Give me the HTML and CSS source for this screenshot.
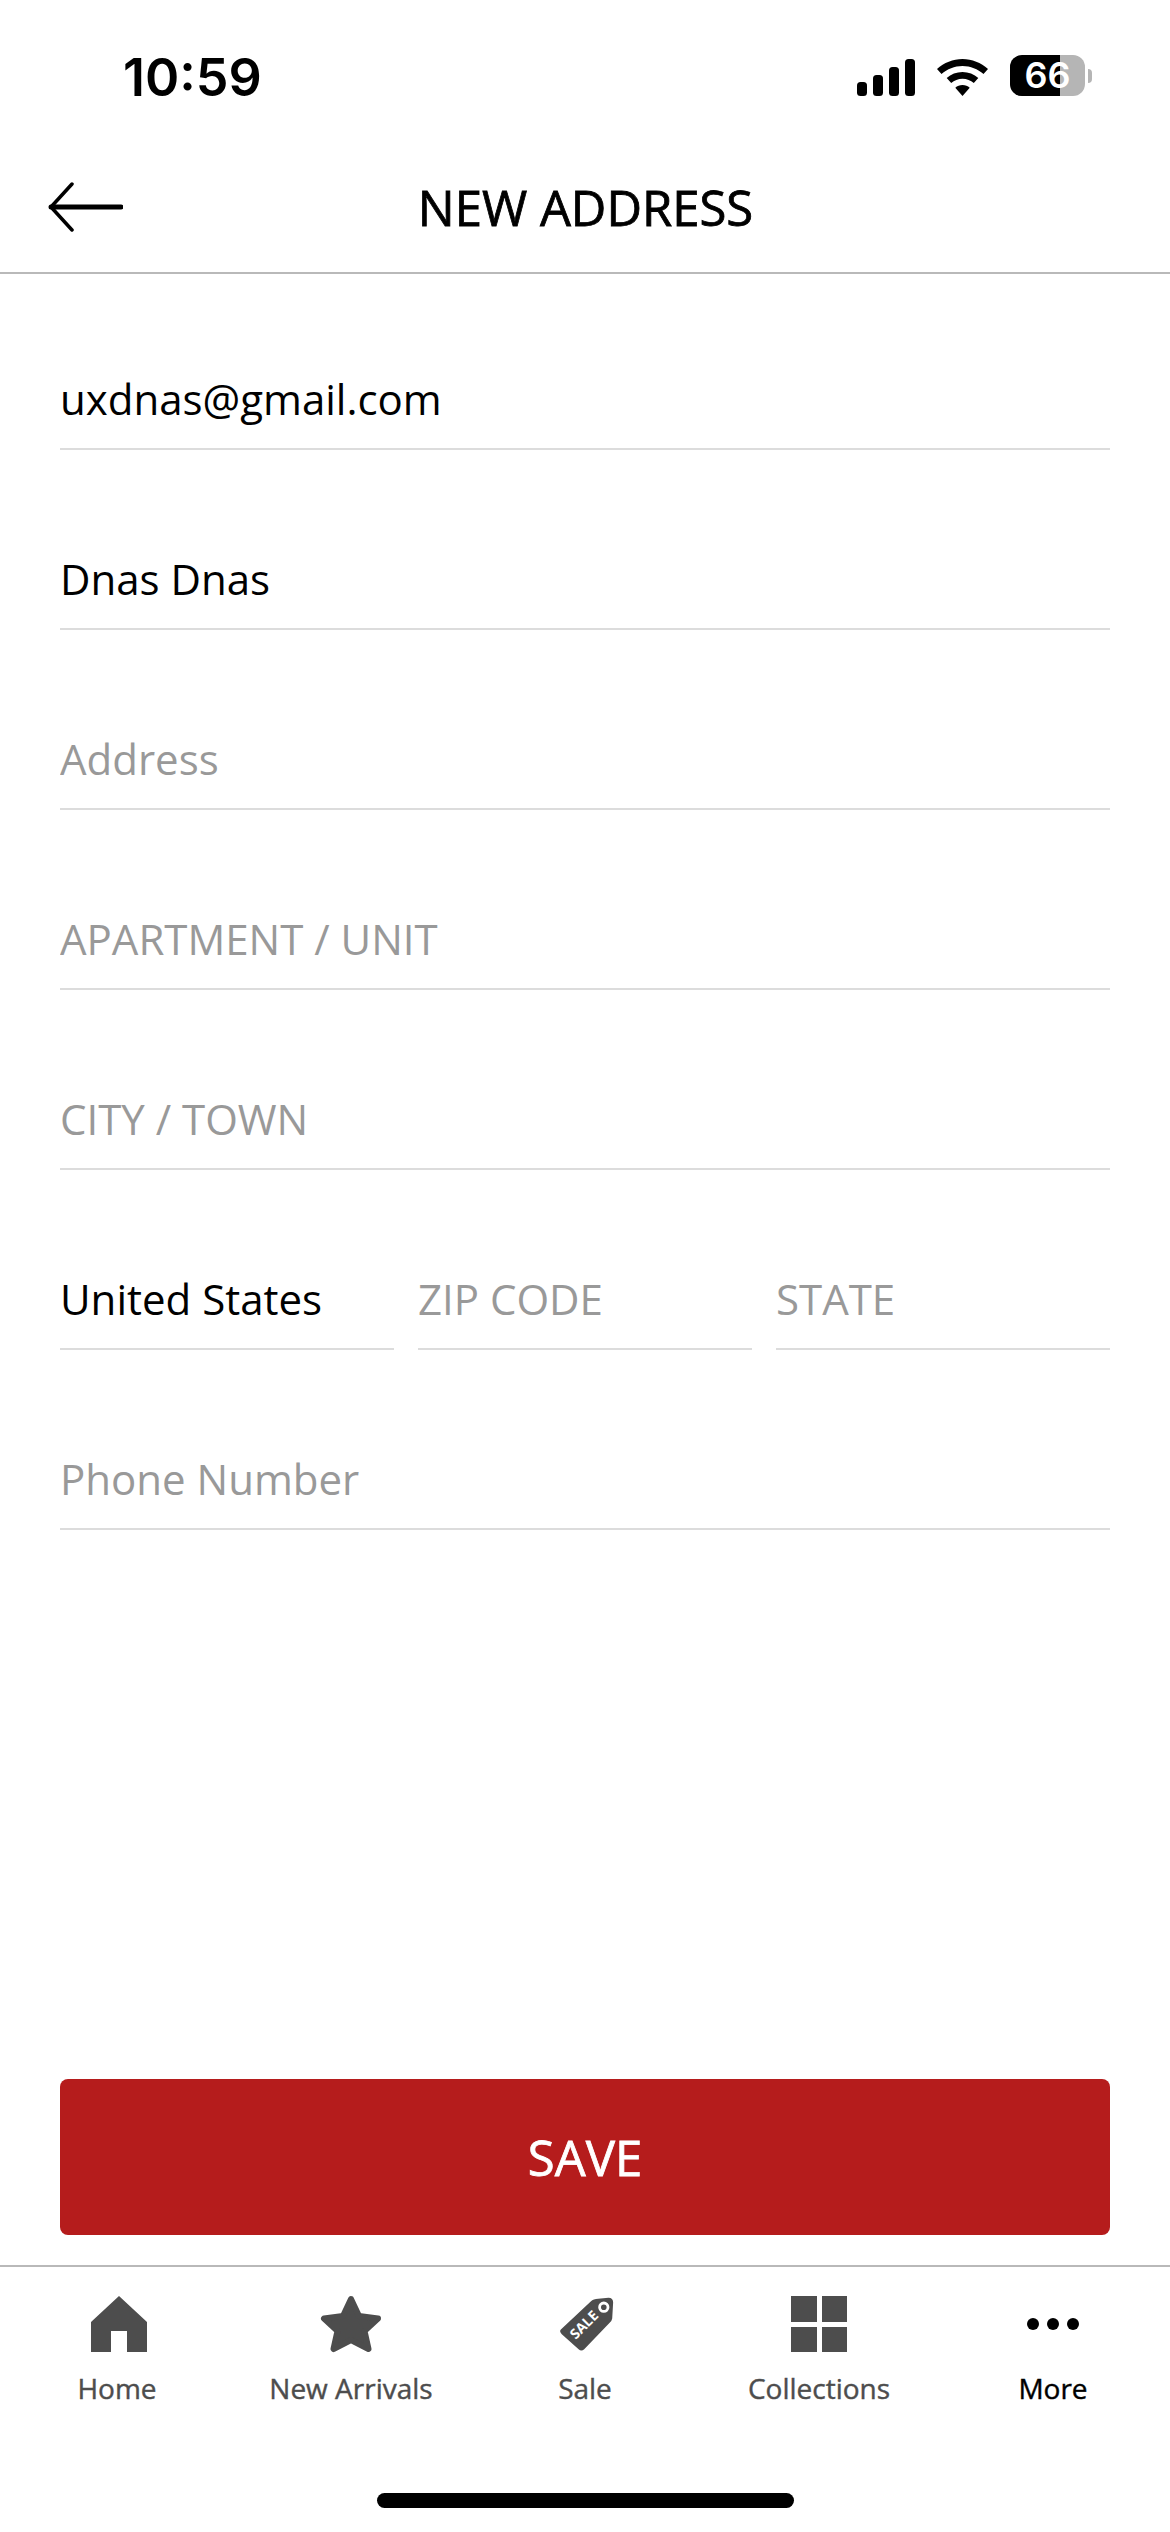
FILE: index.html
```html
<!DOCTYPE html>
<html>
<head>
    <title>New Address</title>
    <meta name="viewport" content="width=device-width, initial-scale=1.0">
    <link rel="stylesheet" href="styles.css">
</head>
<body>
    <div id="container">
        <div class="status-bar">
            <span class="time">10:59</span>
            <div class="status-icons">
                <svg class="signal" width="58" height="37" viewBox="0 0 58 37">
                    <rect x="0" y="23" width="10" height="14" rx="3.5"/>
                    <rect x="16" y="16" width="10" height="21" rx="3.5"/>
                    <rect x="32" y="8" width="10" height="29" rx="3.5"/>
                    <rect x="48" y="0" width="10" height="37" rx="3.5"/>
                </svg>
                <svg class="wifi" width="51" height="37" viewBox="0 0 51 37">
                    <path d="M25.5 0C35 0 44 3.700 51 10L46.500 15C40.800 10 33.500 7 25.500 7S10.200 10 4.500 15L0 10C7 3.700 16 0 25.500 0Z"/>
                    <path d="M25.500 13C31.500 13 37 15.200 41.300 19L36.800 24C33.700 21.400 29.800 19.800 25.500 19.800S17.300 21.400 14.200 24L9.700 19C14 15.200 19.500 13 25.500 13Z"/>
                    <path d="M25.500 26C28.300 26 30.800 27 32.700 28.700L25.500 37L18.300 28.700C20.200 27 22.700 26 25.500 26Z"/>
                </svg>
                <div class="battery">
                    <div class="battery-body">
                        <div class="battery-fill"></div>
                        <span class="battery-text">66</span>
                    </div>
                    <div class="battery-nub"></div>
                </div>
            </div>
        </div>

        <div class="nav-bar">
            <svg class="back-icon" width="76" height="50" viewBox="0 0 76 50">
                <path class="back-shaft" d="M4 25H74"/>
                <path class="back-head" d="M25 2L4 25L25 48"/>
            </svg>
            <h1 class="nav-title">NEW ADDRESS</h1>
        </div>

        <form class="address-form">
            <div class="field"><input type="text" value="uxdnas@gmail.com" placeholder="Email"></div>
            <div class="field"><input type="text" value="Dnas Dnas" placeholder="Name"></div>
            <div class="field"><input type="text" placeholder="Address"></div>
            <div class="field"><input type="text" placeholder="APARTMENT / UNIT"></div>
            <div class="field"><input type="text" placeholder="CITY / TOWN"></div>
            <div class="field-row">
                <div class="field"><input type="text" value="United States" placeholder="Country"></div>
                <div class="field"><input type="text" placeholder="ZIP CODE"></div>
                <div class="field"><input type="text" placeholder="STATE"></div>
            </div>
            <div class="field"><input type="text" placeholder="Phone Number"></div>
        </form>

        <div class="save-wrap">
            <button class="save-btn" type="button">SAVE</button>
        </div>

        <nav class="tab-bar">
            <div class="tab">
                <svg class="tab-icon home-icon" width="56" height="56" viewBox="0 0 56 56">
                    <path d="M28 0L56 26V56H36V35H20V56H0V26Z"/>
                </svg>
                <span class="tab-label">Home</span>
            </div>
            <div class="tab">
                <svg class="tab-icon star" width="60" height="56" viewBox="0 0 60 56">
                    <path d="M30 3L38 20L57 22.500L43.500 35L47.500 53L30 44L12.500 53L16.500 35L3 22.500L22 20Z"/>
                </svg>
                <span class="tab-label">New Arrivals</span>
            </div>
            <div class="tab">
                <svg class="tab-icon tag-icon" width="60" height="60" viewBox="0 0 60 60">
                    <path d="M2 36L34 6Q37 3 42 3L53 2Q58 2 58 7L57 24Q56.500 27 54 29L27 57Q24 60 21 57L3 41Q0 38 2 36Z"/>
                    <circle class="tag-hole" cx="48" cy="12" r="4.500"/>
                    <text class="tag-text" x="27" y="36" transform="rotate(-45 27 31)" text-anchor="middle">SALE</text>
                </svg>
                <span class="tab-label">Sale</span>
            </div>
            <div class="tab">
                <div class="tab-icon grid-icon">
                    <span></span><span></span><span></span><span></span>
                </div>
                <span class="tab-label">Collections</span>
            </div>
            <div class="tab active">
                <div class="tab-icon dots-icon">
                    <span></span><span></span><span></span>
                </div>
                <span class="tab-label">More</span>
            </div>
        </nav>

        <div class="home-bar"><div class="home-indicator"></div></div>
    </div>
</body>
</html>
```

FILE: styles.css
```css
* {
    box-sizing: border-box;
}
body {
    font-family: "Open Sans", Arial, sans-serif;
    background-color: #fff;
    margin: 0;
    padding: 0;
}
#container {
    display: flex;
    flex-direction: column;
    height: 2532px;
    overflow: hidden;
}

/* status bar */
.status-bar {
    height: 110px;
    padding: 52px 78px 0 123px;
    display: flex;
    justify-content: space-between;
    align-items: flex-start;
}
.time {
    font-family: Inter, "Liberation Sans", sans-serif;
    font-size: 52px;
    font-weight: 600;
    line-height: 52px;
    color: #000;
}
.status-icons {
    display: flex;
    align-items: flex-start;
    margin-top: 5px;
}
.signal {
    margin-top: 2px;
}
.wifi {
    margin-top: 2px;
    margin-left: 22px;
}
.battery {
    display: flex;
    align-items: center;
    margin-left: 22px;
    margin-top: -2px;
}
.battery-body {
    position: relative;
    width: 75px;
    height: 41px;
    border-radius: 12px;
    background-color: #b5b5b5;
    display: flex;
    align-items: center;
    justify-content: center;
}
.battery-fill {
    position: absolute;
    left: 0;
    top: 0;
    bottom: 0;
    width: 50px;
    border-radius: 12px 0 0 12px;
    background-color: #000;
}
.battery-text {
    position: relative;
    font-family: Inter, "Liberation Sans", sans-serif;
    font-size: 36px;
    font-weight: 600;
    line-height: 41px;
    color: #fff;
}
.battery-nub {
    width: 4px;
    height: 14px;
    margin-left: 3px;
    border-radius: 0 4px 4px 0;
    background-color: #b5b5b5;
}

/* header */
.nav-bar {
    position: relative;
    height: 164px;
    padding-top: 32px;
    border-bottom: 2px solid #b9b9b9;
    display: flex;
    align-items: center;
    justify-content: center;
}
.back-icon {
    position: absolute;
    left: 47px;
    top: 72px;
}
.back-shaft {
    fill: none;
    stroke: #000;
    stroke-width: 5;
    stroke-linecap: round;
}
.back-head {
    fill: none;
    stroke: #000;
    stroke-width: 3.500;
    stroke-linecap: round;
    stroke-linejoin: round;
}
.nav-title {
    margin: 0 0 0 1px;
    font-size: 49px;
    font-weight: 400;
    -webkit-text-stroke: 0.8px #000;
    line-height: 60px;
    color: #000;
}

/* form */
.address-form {
    flex: 1;
    padding: 92px 60px 0;
    display: flex;
    flex-direction: column;
    gap: 96px;
}
.field {
    height: 84px;
    border-bottom: 2px solid #dcdcdc;
    flex: 1;
}
.address-form > .field {
    flex: none;
}
.field-row {
    display: flex;
    gap: 24px;
}
.field input {
    display: block;
    width: 100%;
    height: 64px;
    padding: 0;
    border: none;
    outline: none;
    background: transparent;
    font-family: "Open Sans", Arial, sans-serif;
    font-size: 42px;
    color: #000;
}
.field input::placeholder {
    color: #999;
    opacity: 1;
}

/* save */
.save-wrap {
    padding: 0 60px;
}
.save-btn {
    display: block;
    width: 100%;
    height: 156px;
    border: none;
    border-radius: 8px;
    background-color: #b51c1c;
    color: #fff;
    font-family: "Open Sans", Arial, sans-serif;
    font-size: 49px;
    font-weight: 400;
    -webkit-text-stroke: 0.8px #fff;
    cursor: pointer;
}

/* tabs */
.tab-bar {
    margin-top: 30px;
    height: 267px;
    border-top: 2px solid #b9b9b9;
    padding-top: 29px;
    display: flex;
}
.tab {
    width: 234px;
    display: flex;
    flex-direction: column;
    align-items: center;
    color: #4d4d4d;
}
.tab.active {
    color: #000;
}
.tab-icon {
    height: 56px;
    fill: #4d4d4d;
    flex: none;
}
svg.tab-icon {
    overflow: visible;
}
.home-icon {
    margin-left: 4px;
}
.tag-icon {
    margin-left: 3px;
}
.star path {
    stroke: #4d4d4d;
    stroke-width: 6;
    stroke-linejoin: round;
}
.tag-hole {
    fill: #4d4d4d;
    stroke: #fff;
    stroke-width: 3;
}
.tag-text {
    font-family: "Open Sans", Arial, sans-serif;
    font-size: 15px;
    font-weight: 700;
    fill: #fff;
}
.grid-icon {
    width: 56px;
    display: grid;
    grid-template-columns: 1fr 1fr;
    grid-template-rows: 1fr 1fr;
    gap: 5px;
}
.grid-icon span {
    background-color: #4d4d4d;
}
.dots-icon {
    width: 56px;
    display: flex;
    align-items: center;
    justify-content: space-between;
    padding: 0 2px;
}
.dots-icon span {
    width: 12px;
    height: 12px;
    border-radius: 50%;
    background-color: #000;
}
.tab-label {
    margin-top: 17px;
    font-size: 28px;
    line-height: 38px;
    -webkit-text-stroke: 0.4px currentColor;
}

/* home indicator */
.home-bar {
    position: absolute;
    left: 0;
    right: 0;
    top: 2493px;
    display: flex;
    justify-content: center;
}
.home-indicator {
    width: 417px;
    height: 15px;
    border-radius: 8px;
    background-color: #000;
}
```
